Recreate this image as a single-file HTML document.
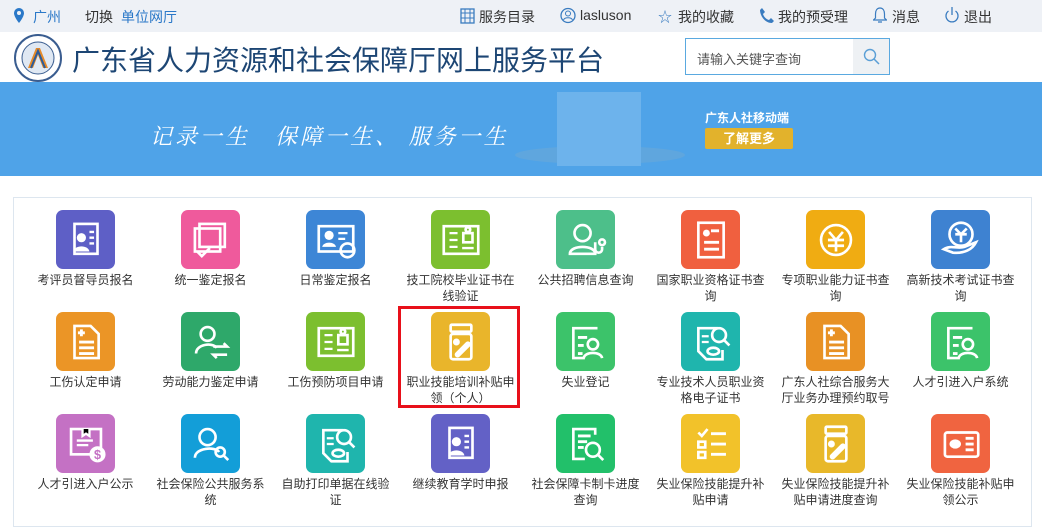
<!DOCTYPE html>
<html><head><meta charset="utf-8"><style>
*{margin:0;padding:0;box-sizing:border-box}
body{width:1042px;height:520px;overflow:hidden;background:#fff;font-family:"Liberation Sans","Noto Sans CJK SC",sans-serif;color:#333;position:relative}
.top{position:absolute;left:0;top:0;width:1042px;height:32px;background:#eef1f6;font-size:14px}
.top span{position:absolute;top:7px;white-space:nowrap}
.blue{color:#2a78c8}
.hdr{position:absolute;top:32px;left:0;width:1042px;height:50px;background:#fff}
.title{position:absolute;left:72px;top:7px;font-size:28px;color:#1d4674;white-space:nowrap}
.search{position:absolute;left:685px;top:6px;width:205px;height:37px;border:1px solid #5aa9e0;background:#fff}
.search span{position:absolute;left:11px;top:10px;font-size:13px;color:#555}
.search .btn{position:absolute;right:0;top:0;width:36px;height:35px;background:#eef1f4}
.banner{position:absolute;top:82px;left:0;width:1042px;height:94px;background:#4fa3e8}
.slogan{position:absolute;left:150px;top:38px;color:#fff;font-size:22px;font-style:italic;font-family:"Liberation Serif","Noto Serif CJK SC",serif;letter-spacing:3px;white-space:nowrap}
.phone{position:absolute;left:557px;top:10px;width:84px;height:74px;background:#6db3ec}
.panel{position:absolute;left:13px;top:197px;width:1019px;height:330px;border:1px solid #dde6ef;background:#fff}
.it{position:absolute;width:111px;text-align:center;font-size:12px;line-height:16px;color:#333}
.ic{width:59px;height:59px;border-radius:7px;margin:0 auto 3px;display:flex;align-items:center;justify-content:center}
.red{position:absolute;left:398px;top:306px;width:122px;height:102px;border:3px solid #e8101a}
</style></head><body>
<div class="top">
<svg style="position:absolute;left:14px;top:8px" width="10" height="15" viewBox="0 0 10 15"><path d="M5 0a5 5 0 0 1 5 5c0 4-5 10-5 10S0 9 0 5a5 5 0 0 1 5-5z" fill="#2a78c8"/><circle cx="5" cy="5" r="2" fill="#eef1f6"/></svg>
<span class="blue" style="left:33px">广州</span>
<span style="left:85px">切换</span><span class="blue" style="left:121px">单位网厅</span>
<svg style="position:absolute;left:460px;top:8px" width="15" height="16"><rect x="1" y="1" width="13" height="14" fill="none" stroke="#3a7cc0" stroke-width="1.3"/><path d="M5 1v14M10 1v14M1 5h13M1 10h13" stroke="#3a7cc0"/></svg>
<span style="left:479px">服务目录</span>
<svg style="position:absolute;left:560px;top:7px" width="16" height="17"><circle cx="8" cy="8.5" r="7" fill="none" stroke="#3a7cc0" stroke-width="1.3"/><circle cx="8" cy="6.5" r="2.5" fill="none" stroke="#3a7cc0"/><path d="M3.5 13c1-3 8-3 9 0" fill="none" stroke="#3a7cc0"/></svg>
<span style="left:580px">lasluson</span>
<span style="left:658px;color:#3a7cc0">☆</span><span style="left:678px">我的收藏</span>
<svg style="position:absolute;left:759px;top:7px" width="15" height="17"><path d="M3 1l3 4-2 2c1 3 3 5 6 6l2-2 3 3-2 2C6 16 1 9 1 3z" fill="#3a7cc0"/></svg>
<span style="left:778px">我的预受理</span>
<svg style="position:absolute;left:873px;top:6px" width="14" height="18"><path d="M7 2c3 0 4.5 2.5 4.5 6v4l2 2H.5l2-2V8c0-3.5 1.5-6 4.5-6zM5 16h4" fill="none" stroke="#3a7cc0" stroke-width="1.2"/></svg>
<span style="left:892px">消息</span>
<svg style="position:absolute;left:944px;top:6px" width="16" height="18"><path d="M4.5 5a6 6 0 1 0 7 0" fill="none" stroke="#3a7cc0" stroke-width="1.3"/><path d="M8 1v8" stroke="#3a7cc0" stroke-width="1.3"/></svg>
<span style="left:964px">退出</span>
</div>
<div class="hdr">
<svg style="position:absolute;left:14px;top:2px" width="48" height="48" viewBox="0 0 48 48"><circle cx="24" cy="24" r="23" fill="#fff" stroke="#3a5d90" stroke-width="2"/><circle cx="24" cy="24" r="16" fill="#dfe8f3" stroke="#3a5d90"/><path d="M14 34L22 14h4l8 20h-5l-5-13-5 13z" fill="#e58a2a"/><path d="M17 34l7-17 7 17" fill="none" stroke="#2b5c9a" stroke-width="2"/></svg>
<div class="title">广东省人力资源和社会保障厅网上服务平台</div>
<div class="search"><span>请输入关键字查询</span><div class="btn"><svg style="position:absolute;left:10px;top:9px" width="17" height="18"><circle cx="7" cy="7" r="5.5" fill="none" stroke="#5a9fd6" stroke-width="1.4"/><path d="M11 11l5 5" stroke="#5a9fd6" stroke-width="1.5"/></svg></div></div>
</div>
<div class="banner">
<div class="slogan">记录一生　保障一生、 服务一生</div>
<div style="position:absolute;left:515px;top:64px;width:170px;height:18px;border-radius:50%;background:#5fa6de"></div>
<div class="phone"></div>
<div style="position:absolute;left:705px;top:27px;color:#fff;font-size:12px;font-weight:bold">广东人社移动端</div>
<div style="position:absolute;left:705px;top:46px;width:88px;height:21px;background:#e2b22c;border-radius:2px;color:#fff;font-size:13px;font-weight:bold;text-align:center;line-height:21px">了解更多</div>
</div>
<div class="panel"></div>
<div id="g"></div>
<div class="red"></div>
<script>
var d=[
["考评员督导员报名","#5e5fc6","p"],["统一鉴定报名","#ef5a9c","d"],["日常鉴定报名","#3d86d6","c"],["技工院校毕业证书在线验证","#7cbf2f","m"],["公共招聘信息查询","#4dbf8a","n"],["国家职业资格证书查询","#f0603f","c2"],["专项职业能力证书查询","#f0ac12","y"],["高新技术考试证书查询","#3e82d1","y2"],
["工伤认定申请","#eb9526","f"],["劳动能力鉴定申请","#2ea86a","u"],["工伤预防项目申请","#7cbf2f","m"],["职业技能培训补贴申领（个人）","#e9b52b","j"],["失业登记","#3cc36a","r"],["专业技术人员职业资格电子证书","#1fb5ad","s"],["广东人社综合服务大厅业务办理预约取号","#e89124","f"],["人才引进入户系统","#3cc36a","r"],
["人才引进入户公示","#c471c4","b"],["社会保险公共服务系统","#139ed8","q"],["自助打印单据在线验证","#1fb5ad","s"],["继续教育学时申报","#6361c6","p"],["社会保障卡制卡进度查询","#22c06a","k"],["失业保险技能提升补贴申请","#f2c22a","l"],["失业保险技能提升补贴申请进度查询","#e8b82a","j"],["失业保险技能补贴申领公示","#f06440","x"]];
var S='fill="none" stroke="#fff" stroke-width="2.3"';
var ic={
p:'<rect x="10" y="6" width="20" height="26" '+S+'/><circle cx="16" cy="18" r="4" fill="#fff"/><path d="M9 30c1-6 13-6 14 0z" fill="#fff"/><path d="M23 13h4M23 18h4M23 23h4" stroke="#fff" stroke-width="2"/>',
d:'<rect x="10" y="6" width="22" height="20" '+S+'/><rect x="6" y="10" width="22" height="20" '+S+'/><path d="M8 30l4 4 7-7" '+S+'/>',
c:'<rect x="5" y="8" width="30" height="22" '+S+'/><circle cx="14" cy="16" r="4" fill="#fff"/><path d="M8 26c1-5 11-5 12 0z" fill="#fff"/><path d="M22 14h8M22 19h6" stroke="#fff" stroke-width="2"/><circle cx="30" cy="29" r="6" '+S+'/>',
m:'<rect x="5" y="8" width="30" height="24" '+S+'/><path d="M10 14h7M10 20h7M10 26h7M21 27h10" stroke="#fff" stroke-width="2"/><rect x="22" y="14" width="8" height="8" '+S+'/><circle cx="26" cy="11" r="2" '+S+'/>',
n:'<circle cx="17" cy="14" r="7" '+S+'/><path d="M6 32c0-8 22-8 22 0zM28 22v6a3 3 0 0 0 6 0v-2" '+S+'/><circle cx="34" cy="22" r="2.5" '+S+'/>',
c2:'<rect x="9" y="5" width="22" height="30" '+S+'/><circle cx="16" cy="14" r="3" fill="#fff"/><path d="M20 12h7M14 22h13M14 28h13" stroke="#fff" stroke-width="2.5"/>',
y:'<circle cx="20" cy="20" r="13" '+S+'/><path d="M14 13l6 7 6-7M13 20h14M13 25h14M20 20v10" '+S+'/>',
y2:'<circle cx="20" cy="15" r="10" '+S+'/><path d="M15 10l5 5 5-5M15 15h10M20 15v7" '+S+'/><path d="M5 28c6-4 12 0 18-2l10-4c-3 6-10 10-20 9z" '+S+'/>',
f:'<path d="M10 6h14l7 7v21H10z" '+S+'/><path d="M13 12h6M16 9v6M14 20h13M14 25h13M14 30h13" stroke="#fff" stroke-width="2.5"/>',
u:'<circle cx="17" cy="13" r="6" '+S+'/><path d="M7 30c0-8 14-10 18-5" '+S+'/><path d="M22 24h12l-3-3M34 31H22l3 3" '+S+'/>',
j:'<rect x="11" y="5" width="18" height="6" rx="1" '+S+'/><rect x="11" y="13" width="18" height="22" rx="2" '+S+'/><circle cx="16" cy="20" r="3" fill="#fff"/><path d="M17 31l9-9" stroke="#fff" stroke-width="5" stroke-linecap="round"/>',
r:'<path d="M30 8H9v26h10" '+S+'/><path d="M13 16h8M13 23h5M13 30h4" stroke="#fff" stroke-width="2.5"/><circle cx="26" cy="22" r="4.5" '+S+'/><path d="M18 34c1-6 15-6 16 0" '+S+'/>',
s:'<path d="M26 8H9v20l7 7h14v-8" '+S+'/><path d="M12 15h6M12 20h6" stroke="#fff" stroke-width="2"/><circle cx="27" cy="14" r="6" '+S+'/><path d="M31 18l5 5" '+S+'/><ellipse cx="22" cy="28" rx="5" ry="3" '+S+'/>',
b:'<rect x="7" y="7" width="26" height="22" '+S+'/><path d="M17 7v6l3-2 3 2V7M12 17h14M12 21h10" stroke="#fff" stroke-width="2"/><circle cx="30" cy="29" r="7" fill="#fff"/><text x="30" y="33" font-size="11" font-weight="bold" text-anchor="middle" fill="#c471c4" font-family="Liberation Sans">$</text>',
q:'<circle cx="17" cy="14" r="7" '+S+'/><path d="M6 32c0-9 18-10 21-5" '+S+'/><circle cx="28" cy="27" r="4" '+S+'/><path d="M31 30l4 4" '+S+'/>',
k:'<path d="M28 12V7H9v26h10" '+S+'/><path d="M13 13h11M13 18h8M13 23h5" stroke="#fff" stroke-width="2.5"/><circle cx="26" cy="25" r="6" '+S+'/><path d="M30 29l5 5" '+S+'/>',
l:'<path d="M9 10l3 3 5-6" '+S+'/><rect x="9" y="18" width="6" height="5" '+S+'/><rect x="9" y="27" width="6" height="5" '+S+'/><path d="M20 11h13M20 20h13M20 29h13" stroke="#fff" stroke-width="2.5"/>',
x:'<rect x="6" y="10" width="29" height="21" rx="2" '+S+'/><ellipse cx="15" cy="20" rx="5" ry="4" fill="#fff"/><path d="M24 15h7M24 20h7M24 25h7" stroke="#fff" stroke-width="2.5"/>'
};
var h='';
d.forEach(function(e,i){var r=Math.floor(i/8),c=i%8;var x=30+c*125,y=210+r*102;
h+='<div class="it" style="left:'+x+'px;top:'+y+'px"><div class="ic" style="background:'+e[1]+'"><svg width="46" height="46" viewBox="0 0 40 40">'+ic[e[2]]+'</svg></div>'+e[0]+'</div>';});
document.getElementById('g').innerHTML=h;
</script>
</body></html>
